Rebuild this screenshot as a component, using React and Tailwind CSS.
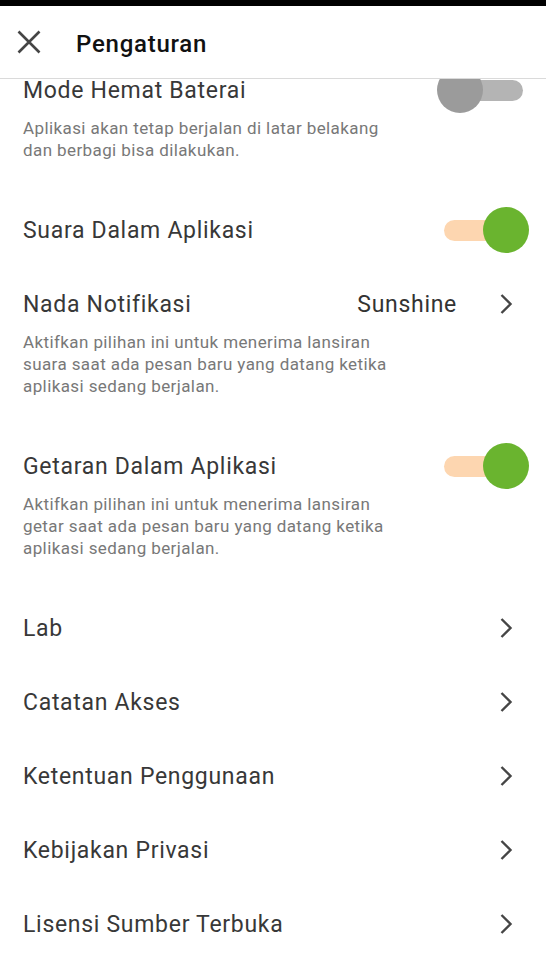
import React from 'react'

function Toggle({ on }) {
  return (
    <div className="relative w-[92px] h-[46px] shrink-0">
      <div className={`absolute left-[7px] right-[6px] top-[12.5px] h-[21px] rounded-full ${on ? 'bg-[#fdd6b0]' : 'bg-[#b4b4b4]'}`} />
      <div
        className={`absolute top-0 w-[46px] h-[46px] rounded-full ${on ? 'right-0 bg-[#6ab42f]' : 'left-0 bg-[#9b9b9b]'}`}
      />
    </div>
  )
}

function Chevron() {
  return (
    <svg width="14" height="22" viewBox="0 0 14 22" className="shrink-0">
      <path d="M2.5 2 L11.5 11 L2.5 20" fill="none" stroke="#454545" strokeWidth="2.4" />
    </svg>
  )
}

function Item({ title, desc, right }) {
  return (
    <div className={desc ? 'pb-[18px]' : ''}>
      <div className="flex items-center justify-between h-[46px] pl-[23px] pr-[17px]">
        <div className="pt-[2px] text-[23px] leading-[22px] tracking-[0.7px] text-[#383838]">{title}</div>
        {right}
      </div>
      {desc && (
        <div className="mt-[4px] pl-[23px] text-[17px] leading-[22px] tracking-[0.4px] text-[#787878]">
          {desc.map((l, i) => (
            <div key={i}>{l}</div>
          ))}
        </div>
      )}
    </div>
  )
}

const chevronRight = (
  <div className="mr-[16px] flex items-center">
    <Chevron />
  </div>
)

export default function App() {
  return (
    <div className="w-[546px] h-[960px] overflow-hidden bg-white font-['Roboto',sans-serif]">
      <div className="h-[6px] bg-black" />
      <div className="h-[73px] flex items-center border-b border-[#dadada] relative z-10 bg-white">
        <svg width="24" height="24" viewBox="0 0 24 24" className="ml-[16.5px]">
          <path d="M1.5 1.5 L22.5 22.5 M22.5 1.5 L1.5 22.5" stroke="#454545" strokeWidth="2.6" fill="none" />
        </svg>
        <div className="ml-[35.5px] pt-[3px] text-[24px] tracking-[0.75px] font-medium text-[#111]">Pengaturan</div>
      </div>

      <div className="overflow-hidden">
        <div className="-mt-[12px] flex flex-col gap-[28px]">
          <Item
            title="Mode Hemat Baterai"
            desc={['Aplikasi akan tetap berjalan di latar belakang', 'dan berbagi bisa dilakukan.']}
            right={<Toggle on={false} />}
          />
          <Item title="Suara Dalam Aplikasi" right={<Toggle on />} />
          <Item
            title="Nada Notifikasi"
            desc={[
              'Aktifkan pilihan ini untuk menerima lansiran',
              'suara saat ada pesan baru yang datang ketika',
              'aplikasi sedang berjalan.',
            ]}
            right={
              <div className="flex items-center mr-[16px]">
                <span className="pt-[2px] text-[23px] leading-[22px] tracking-[0.7px] text-[#333]">Sunshine</span>
                <span className="ml-[42px] flex items-center">
                  <Chevron />
                </span>
              </div>
            }
          />
          <Item
            title="Getaran Dalam Aplikasi"
            desc={[
              'Aktifkan pilihan ini untuk menerima lansiran',
              'getar saat ada pesan baru yang datang ketika',
              'aplikasi sedang berjalan.',
            ]}
            right={<Toggle on />}
          />
          <Item title="Lab" right={chevronRight} />
          <Item title="Catatan Akses" right={chevronRight} />
          <Item title="Ketentuan Penggunaan" right={chevronRight} />
          <Item title="Kebijakan Privasi" right={chevronRight} />
          <Item title="Lisensi Sumber Terbuka" right={chevronRight} />
        </div>
      </div>
    </div>
  )
}
